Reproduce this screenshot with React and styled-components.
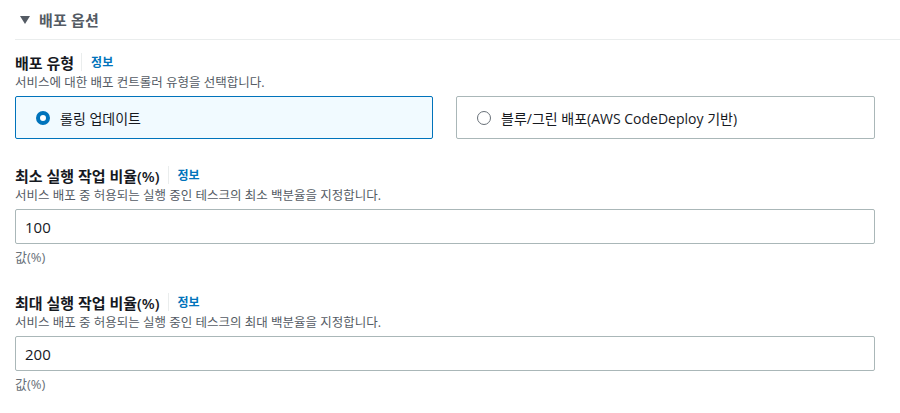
import React from "react";
import styled, { createGlobalStyle } from "styled-components";

const Global = createGlobalStyle`
  html, body { margin: 0; padding: 0; background: #ffffff; }
  body {
    font-family: "Open Sans", "Noto Sans CJK KR", "Noto Sans", sans-serif;
    color: #16191f;
  }
  * { box-sizing: border-box; }
`;

const Page = styled.div`
  width: 900px;
  height: 413px;
  padding-left: 15px;
  overflow: hidden;
`;

const Header = styled.div`
  display: flex;
  align-items: center;
  gap: 9px;
  height: 40px;
  padding-left: 5px;
  border-bottom: 1px solid #eaeded;
`;

const Caret = styled.svg`
  width: 10px;
  height: 8px;
  fill: #545b64;
`;

const HeaderTitle = styled.h2`
  margin: 0;
  font-size: 15px;
  font-weight: 700;
  color: #545b64;
  letter-spacing: 0.2px;
`;

const Content = styled.div`
  width: 860px;
  display: flex;
  flex-direction: column;
  gap: 25px;
  padding-top: 11px;
`;

const Field = styled.div`
  display: flex;
  flex-direction: column;
`;

const LabelRow = styled.div`
  display: flex;
  align-items: center;
  height: 22px;
`;

const Label = styled.span`
  font-size: 15px;
  font-weight: 600;
  color: #16191f;
`;

const Divider = styled.span`
  width: 1px;
  height: 18px;
  background: #eaeded;
  margin: 0 9px 0 ${(p) => p.$gap || 7}px;
`;

const Info = styled.a`
  font-size: 12px;
  font-weight: 700;
  color: #0073bb;
  text-decoration: none;
`;

const Desc = styled.div`
  margin-top: 1px;
  font-size: 12.5px;
  line-height: 17px;
  color: #545b64;
`;

const Tiles = styled.div`
  display: grid;
  grid-template-columns: 418px 419px;
  gap: 23px;
  margin-top: 5px;
`;

const Tile = styled.label`
  display: flex;
  align-items: center;
  gap: 10px;
  height: 43px;
  padding-left: 20px;
  border: 1px solid ${(p) => (p.$selected ? "#0073bb" : "#aab7b8")};
  border-radius: 2px;
  background: ${(p) => (p.$selected ? "#f1faff" : "#ffffff")};
  font-size: 14px;
  color: #16191f;
  cursor: pointer;
`;

const Radio = styled.span`
  width: 14px;
  height: 14px;
  border-radius: 50%;
  flex: none;
  border: ${(p) => (p.$checked ? "4px solid #0073bb" : "1.5px solid #687078")};
  background: #ffffff;
`;

const Input = styled.input`
  margin-top: 5px;
  width: 860px;
  height: 35px;
  padding: 0 9px;
  border: 1px solid #aab7b8;
  border-radius: 2px;
  font-family: inherit;
  font-size: 15px;
  color: #16191f;
  outline: none;
  background: #ffffff;
`;

const Hint = styled.div`
  margin-top: 4px;
  font-size: 13px;
  line-height: 18px;
  color: #687078;
`;

function NumberField({ label, desc, value }) {
  return (
    <Field>
      <LabelRow>
        <Label>{label}</Label>
        <Divider $gap={8} />
        <Info href="#">정보</Info>
      </LabelRow>
      <Desc>{desc}</Desc>
      <Input defaultValue={value} />
      <Hint>값(%)</Hint>
    </Field>
  );
}

export default function App() {
  return (
    <>
      <Global />
      <Page>
        <Header>
          <Caret viewBox="0 0 10 8">
            <polygon points="0,0 10,0 5,8" />
          </Caret>
          <HeaderTitle>배포 옵션</HeaderTitle>
        </Header>
        <Content>
          <Field>
            <LabelRow>
              <Label>배포 유형</Label>
              <Divider />
              <Info href="#">정보</Info>
            </LabelRow>
            <Desc>서비스에 대한 배포 컨트롤러 유형을 선택합니다.</Desc>
            <Tiles>
              <Tile $selected>
                <Radio $checked />
                롤링 업데이트
              </Tile>
              <Tile>
                <Radio />
                블루/그린 배포(AWS CodeDeploy 기반)
              </Tile>
            </Tiles>
          </Field>
          <NumberField
            label="최소 실행 작업 비율(%)"
            desc="서비스 배포 중 허용되는 실행 중인 테스크의 최소 백분율을 지정합니다."
            value="100"
          />
          <NumberField
            label="최대 실행 작업 비율(%)"
            desc="서비스 배포 중 허용되는 실행 중인 테스크의 최대 백분율을 지정합니다."
            value="200"
          />
        </Content>
      </Page>
    </>
  );
}
